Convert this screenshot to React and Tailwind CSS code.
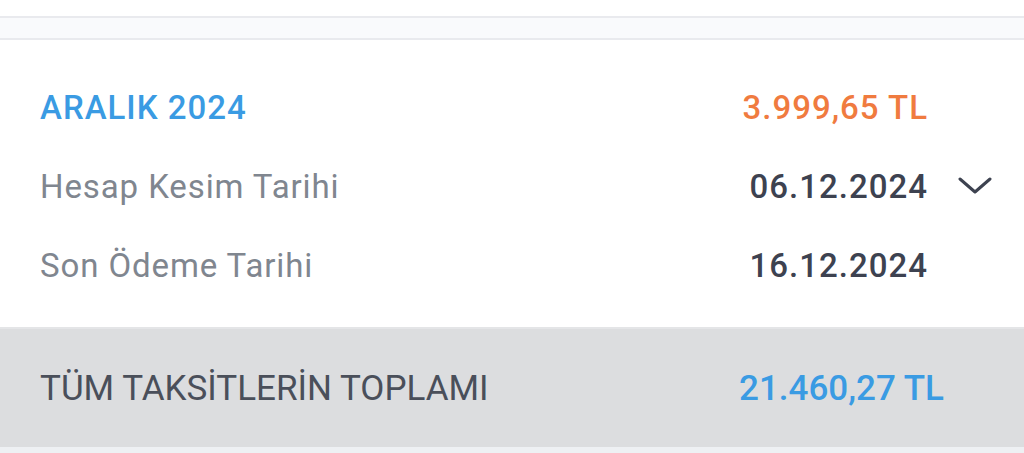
export default function App() {
    const rows = [
        { label: 'Hesap Kesim Tarihi', value: '06.12.2024', chevron: true },
        { label: 'Son Ödeme Tarihi', value: '16.12.2024' },
    ];

    return (
        <div className="w-[1024px] h-[453px] bg-white overflow-hidden flex flex-col" style={{ fontFamily: 'Roboto, "Noto Sans", sans-serif' }}>
            <div className="h-[16px]" />
            <div className="h-[24px] bg-[#f9fafc] border-y-2 border-[#e9eaee]" />

            <div className="flex flex-col pl-[40px] pr-[32px] pt-[47px]">
                <div className="flex items-center h-[40px]">
                    <span className="flex-1 text-[33px] font-medium text-[#3a9be3] leading-none tracking-[1px]">ARALIK 2024</span>
                    <span className="text-[33px] font-medium text-[#f07b3f] leading-none tracking-[1px] mr-[64px]">3.999,65 TL</span>
                </div>
                {rows.map((r) => (
                    <div key={r.label} className="flex items-center h-[40px] mt-[39px]">
                        <span className="flex-1 text-[33px] text-[#80868f] leading-none tracking-[0.9px]">{r.label}</span>
                        <span className="text-[33px] font-medium text-[#3d4250] leading-none tracking-[1px]">{r.value}</span>
                        <span className="w-[64px] flex justify-end">
                            {r.chevron && (
                                <svg width="34" height="20" viewBox="0 0 34 20" fill="none">
                                    <path d="M2 3 L17 16 L32 3" stroke="#3d4250" strokeWidth="3" strokeLinecap="round" strokeLinejoin="round" />
                                </svg>
                            )}
                        </span>
                    </div>
                ))}
            </div>

            <div className="mt-[42px] h-[120px] bg-[#dcdddf] border-t-2 border-[#e4e5e7] flex items-center pl-[40px] pr-[80px]">
                <span className="flex-1 text-[35px] text-[#4a4f5a] leading-none">TÜM TAKSİTLERİN TOPLAMI</span>
                <span className="text-[35px] font-medium text-[#3a9be3] leading-none">21.460,27 TL</span>
            </div>
            <div className="flex-1 bg-[#eef0f3]" />
        </div>
    );
}
